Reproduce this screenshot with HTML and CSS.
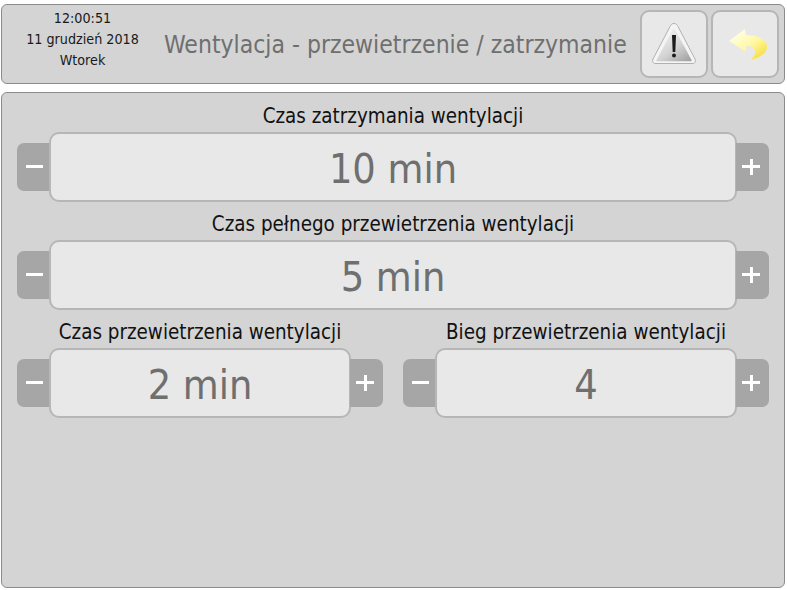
FILE: index.html
```html
<!DOCTYPE html>
<html lang="pl">

<head>
    <meta charset="UTF-8" />
    <title>Wentylacja</title>
    <link rel="stylesheet" href="styles.css">
</head>

<body>
    <header class="top-bar">
        <div class="clock">
            <div>12:00:51</div>
            <div>11 grudzień 2018</div>
            <div>Wtorek</div>
        </div>
        <h1 class="title">Wentylacja - przewietrzenie / zatrzymanie</h1>
        <div class="top-buttons">
            <button class="icon-btn">
                <svg width="46" height="44" viewBox="0 0 46 44">
                    <defs>
                        <linearGradient id="warn" x1="0.2" y1="0.1" x2="0.9" y2="1">
                            <stop offset="0" stop-color="#f0f0f0" />
                            <stop offset="0.55" stop-color="#d2d2d2" />
                            <stop offset="1" stop-color="#a4a4a4" />
                        </linearGradient>
                        <filter id="soft">
                            <feGaussianBlur stdDeviation="0.5" />
                        </filter>
                    </defs>
                    <g filter="url(#soft)">
                        <path d="M23 1.5 C25 1.5 26 2.5 27 4.5 L44 37 C45 40 44 41.5 41 41.5 L5 41.5 C2 41.5 1 40 2 37 L19 4.5 C20 2.5 21 1.5 23 1.5 Z" fill="#f4f4f4" stroke="#b0b0b0" />
                        <path d="M23 7 L40 38.5 L6 38.5 Z" fill="url(#warn)" stroke="url(#warn)" stroke-width="1.5" stroke-linejoin="round" />
                        <path d="M21 13 L25 13 L24.3 30 L21.7 30 Z" fill="#1c1c1c" />
                        <circle cx="23" cy="33.5" r="2" fill="#1c1c1c" />
                    </g>
                </svg>
            </button>
            <button class="icon-btn">
                <svg width="48" height="44" viewBox="0 0 48 44">
                    <defs>
                        <linearGradient id="back" x1="0.1" y1="0.1" x2="0.85" y2="0.95">
                            <stop offset="0" stop-color="#fffff0" />
                            <stop offset="0.55" stop-color="#fff8a0" />
                            <stop offset="1" stop-color="#f5de3a" />
                        </linearGradient>
                        <filter id="soft-back">
                            <feGaussianBlur stdDeviation="0.7" />
                        </filter>
                    </defs>
                    <path d="M8 19 L24 7 L25 13 C36 13 46 17 46 25 C46 31 38 36 30 38 C34 33 36 29 32 26 C30 24 28 24 25 24 L25 30 Z" fill="url(#back)" filter="url(#soft-back)" />
                </svg>
            </button>
        </div>
    </header>

    <main class="panel">
        <section class="setting">
            <div class="setting-label">Czas zatrzymania wentylacji</div>
            <div class="stepper">
                <button class="step minus"><span class="bar"></span></button>
                <div class="value">10 min</div>
                <button class="step plus"><span class="bar"></span><span class="bar upright"></span></button>
            </div>
        </section>
        <section class="setting">
            <div class="setting-label">Czas pełnego przewietrzenia wentylacji</div>
            <div class="stepper">
                <button class="step minus"><span class="bar"></span></button>
                <div class="value">5 min</div>
                <button class="step plus"><span class="bar"></span><span class="bar upright"></span></button>
            </div>
        </section>
        <div class="setting-row">
            <section class="setting">
                <div class="setting-label">Czas przewietrzenia wentylacji</div>
                <div class="stepper">
                    <button class="step minus"><span class="bar"></span></button>
                    <div class="value">2 min</div>
                    <button class="step plus"><span class="bar"></span><span class="bar upright"></span></button>
                </div>
            </section>
            <section class="setting">
                <div class="setting-label">Bieg przewietrzenia wentylacji</div>
                <div class="stepper">
                    <button class="step minus"><span class="bar"></span></button>
                    <div class="value">4</div>
                    <button class="step plus"><span class="bar"></span><span class="bar upright"></span></button>
                </div>
            </section>
        </div>
    </main>
</body>

</html>
```

FILE: styles.css
```css
* {
    box-sizing: border-box;
}

html,
body {
    height: 100%;
}

body {
    margin: 0;
    padding: 4px 2px 2px 1px;
    background-color: #fff;
    color: #1a1a1a;
    font-family: "DejaVu Sans Condensed", "DejaVu Sans", sans-serif;
    display: flex;
    flex-direction: column;
    gap: 8px;
    overflow: hidden;
}

.top-bar {
    height: 80px;
    flex: none;
    display: flex;
    align-items: center;
    background-color: #d4d4d4;
    border: 1px solid #8b8b8b;
    border-radius: 6px;
}

.clock {
    width: 161px;
    flex: none;
    padding-bottom: 10px;
    text-align: center;
    font-size: 14.2px;
    line-height: 21px;
}

.title {
    margin: 0 0 0 1px;
    width: 476px;
    flex: none;
    font-size: 24.5px;
    font-weight: normal;
    color: #6f6f6f;
    white-space: nowrap;
}

.top-buttons {
    display: flex;
    gap: 3px;
}

.icon-btn {
    width: 68px;
    height: 68px;
    padding: 0;
    display: flex;
    align-items: center;
    justify-content: center;
    background-color: #e8e8e8;
    border: 2px solid #b6b6b6;
    border-radius: 9px;
}

.panel {
    flex: 1;
    padding: 9px 15px 0 15px;
    background-color: #d4d4d4;
    border: 1px solid #8b8b8b;
    border-radius: 6px;
}

.setting {
    flex: 1;
    min-width: 0;
}

.setting-label {
    height: 30px;
    line-height: 28px;
    text-align: center;
    font-size: 20.4px;
    color: #111;
    white-space: nowrap;
}

.stepper {
    height: 70px;
    margin-bottom: 8px;
    display: flex;
    align-items: center;
}

.value {
    flex: 1;
    height: 70px;
    margin: 0 -1px;
    position: relative;
    line-height: 70px;
    text-align: center;
    font-size: 41px;
    color: #6f6f6f;
    background-color: #e8e8e8;
    border: 2px solid #b6b6b6;
    border-radius: 10px;
}

.step {
    width: 33px;
    height: 48px;
    padding: 0;
    flex: none;
    position: relative;
    background-color: #a6a6a6;
    border: none;
}

.minus {
    border-radius: 7px 0 0 7px;
}

.plus {
    border-radius: 0 7px 7px 0;
}

.bar {
    position: absolute;
    left: 50%;
    top: 50%;
    width: 17px;
    height: 3px;
    margin: -2px 0 0 -8px;
    background-color: #fff;
}

.plus .bar {
    width: 18px;
    margin-left: -11px;
}

.plus .bar.upright {
    width: 3px;
    height: 16px;
    margin: -8px 0 0 -3px;
}

.setting-row {
    display: flex;
    gap: 20px;
}
```
